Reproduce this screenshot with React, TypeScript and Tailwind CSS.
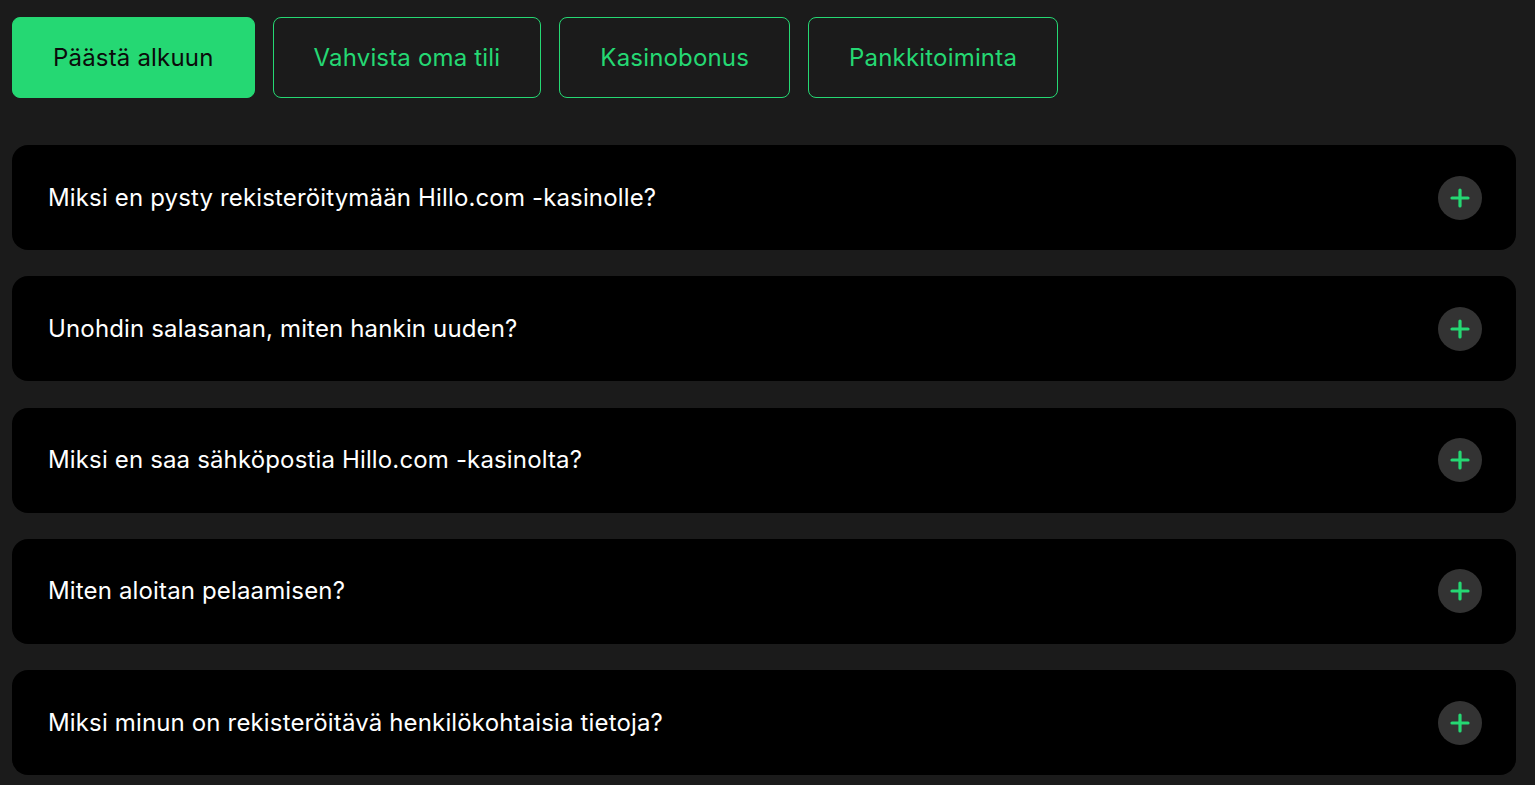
import React from 'react';

const tabs = ['Päästä alkuun', 'Vahvista oma tili', 'Kasinobonus', 'Pankkitoiminta'];

const questions = [
    'Miksi en pysty rekisteröitymään Hillo.com -kasinolle?',
    'Unohdin salasanan, miten hankin uuden?',
    'Miksi en saa sähköpostia Hillo.com -kasinolta?',
    'Miten aloitan pelaamisen?',
    'Miksi minun on rekisteröitävä henkilökohtaisia tietoja?',
];

function Plus() {
    return (
        <div className="flex items-center justify-center w-[44px] h-[44px] rounded-full bg-[#333333]">
            <svg width="20" height="20" viewBox="0 0 20 20">
                <path d="M10 2 V18 M2 10 H18" stroke="#25d873" strokeWidth="3.2" strokeLinecap="round" />
            </svg>
        </div>
    );
}

export default function App() {
    return (
        <div className="min-h-[785px] bg-[#1b1b1b] pl-3 pr-[19px] pt-[17px] font-['Inter','Liberation_Sans',Arial,sans-serif]">
            <div className="flex gap-[18px]">
                {tabs.map((t, i) => (
                    <button
                        key={t}
                        className={
                            i === 0
                                ? 'h-[81px] px-10 rounded-lg bg-[#25d873] text-[#0b0b0b] text-[24px] tracking-[0.18px] border border-[#25d873]'
                                : 'h-[81px] px-10 rounded-lg border border-[#25d873] text-[#25d873] text-[24px] tracking-[0.18px]'
                        }
                    >
                        {t}
                    </button>
                ))}
            </div>

            <div className="flex flex-col gap-[26.25px] mt-[47px]">
                {questions.map(q => (
                    <div key={q} className="flex items-center justify-between h-[105px] rounded-2xl bg-black pl-9 pr-[34px]">
                        <span className="text-white text-[24px] tracking-[0.15px]">{q}</span>
                        <Plus />
                    </div>
                ))}
            </div>
        </div>
    );
}
